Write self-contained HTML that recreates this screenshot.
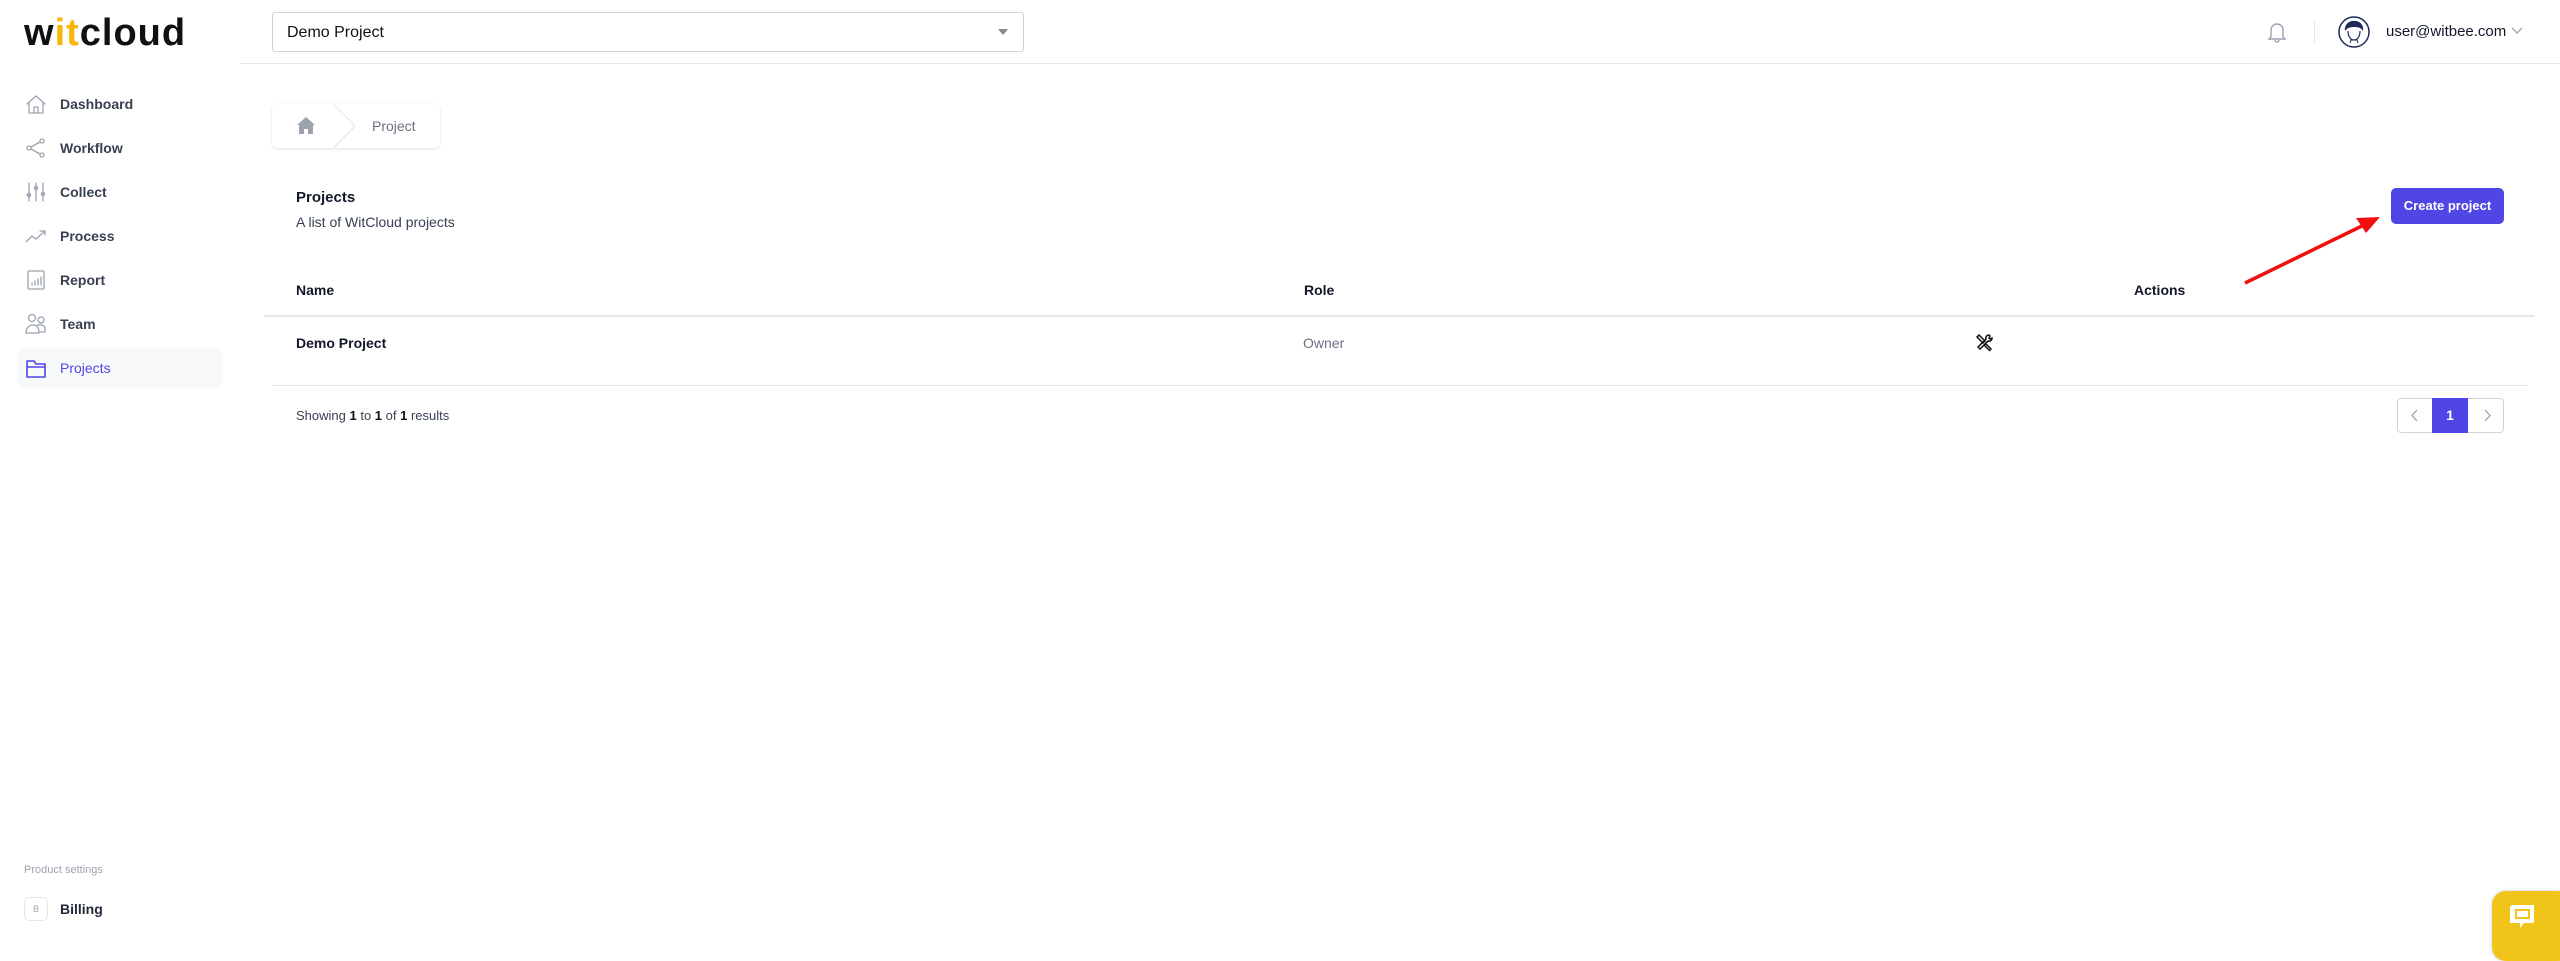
<!DOCTYPE html>
<html><head><meta charset="utf-8"><style>
*{box-sizing:border-box;margin:0;padding:0}
body{width:2560px;height:945px;background:#fff;font-family:"Liberation Sans",sans-serif;position:relative;overflow:hidden;color:#111827}
.a{position:absolute}
.nav{position:absolute;left:25px;height:22px;display:flex;align-items:center;font-size:14px;font-weight:bold;color:#374151}
.nav svg{width:22px;height:22px;margin-right:13px;fill:none;stroke:#9ca3af;stroke-width:1.3;stroke-linecap:round;stroke-linejoin:round}
</style></head><body>
<div class="a" style="left:24px;top:12px;font-size:38px;font-weight:bold;letter-spacing:1px;color:#111;line-height:42px">w<span style="color:#f5b70a">it</span>cloud</div>
<div class="a" style="left:272px;top:12px;width:752px;height:40px;border:1px solid #d1d5db;border-radius:3px;"></div>
<div class="a" style="left:287px;top:24px;font-size:16px;color:#111">Demo Project</div>
<div class="a" style="left:998px;top:29px;width:0;height:0;border-left:5px solid transparent;border-right:5px solid transparent;border-top:6px solid #888"></div>
<div class="a" style="left:240px;top:63px;width:2320px;height:1px;background:#e5e7eb"></div>
<svg class="a" style="left:2267px;top:21px" width="20" height="22" viewBox="0 0 20 22" fill="none" stroke="#9ca3af" stroke-width="1.4"><path d="M4 16V9a6 6 0 0 1 12 0v7l2 2H2z"/><path d="M8 19a2 2 0 0 0 4 0"/></svg>
<div class="a" style="left:2314px;top:21px;width:1px;height:22px;background:#e5e7eb"></div>
<svg class="a" style="left:2338px;top:16px" width="32" height="32" viewBox="0 0 32 32"><circle cx="16" cy="16" r="15" fill="#fff" stroke="#1e2a5a" stroke-width="1.5"/><path d="M7 15c-1-7 5-11 10-10 5 0 9 4 8 10-2-3-4-4-9-4-4 0-7 1-9 4z" fill="#1e2a5a"/><path d="M10 15c0 6 3 9 6 9s6-3 6-9" fill="none" stroke="#1e2a5a" stroke-width="1.2"/><path d="M12 27l1-3h6l1 3" fill="none" stroke="#1e2a5a"/></svg>
<div class="a" style="left:2386px;top:23px;font-size:15px;color:#111827">user@witbee.com</div>
<svg class="a" style="left:2511px;top:27px" width="12" height="8"><path d="M1 1l5 5 5-5" fill="none" stroke="#9ca3af" stroke-width="1.3"/></svg>

<div class="nav" style="top:93px"><svg viewBox="0 0 22 22"><path d="M2 11L11 3l9 8M4 9v11h14V9M9 20v-6h4v6"/></svg>Dashboard</div>
<div class="nav" style="top:137px"><svg viewBox="0 0 22 22"><circle cx="17" cy="4" r="2"/><circle cx="17" cy="18" r="2"/><circle cx="4" cy="11" r="2"/><path d="M6 10l9-5M6 12l9 5"/></svg>Workflow</div>
<div class="nav" style="top:181px"><svg viewBox="0 0 22 22"><path d="M4 2v18M11 2v18M18 2v18"/><circle cx="4" cy="14" r="1.6"/><circle cx="11" cy="7" r="1.6"/><circle cx="18" cy="13" r="1.6"/></svg>Collect</div>
<div class="nav" style="top:225px"><svg viewBox="0 0 22 22"><path d="M1 17l6-6 4 3 9-8M15 6h5v4"/></svg>Process</div>
<div class="nav" style="top:269px"><svg viewBox="0 0 22 22"><rect x="3" y="2" width="16" height="18" rx="1"/><path d="M7 16v-2M10 16v-4M13 16v-6M16 16v-8"/></svg>Report</div>
<div class="nav" style="top:313px"><svg viewBox="0 0 22 22"><circle cx="7" cy="5" r="3.5"/><circle cx="16" cy="7" r="3"/><path d="M1 20c0-6 4-8 7-8s6 2 6 8zM12 13c1-2 7-2 8 2v4h-6"/></svg>Team</div>
<div class="a" style="left:17px;top:348px;width:206px;height:40px;background:#f8f9fb;border-radius:6px"></div>
<div class="nav" style="top:357px;color:#4f46e5;font-weight:normal"><svg viewBox="0 0 22 22" style="stroke:#4f46e5;stroke-width:1.6"><path d="M2 4h7l2 3h9v13H2zM2 10h18"/></svg>Projects</div>

<div class="a" style="left:24px;top:864px;font-size:11px;color:#9ca3af">Product settings</div>
<div class="a" style="left:24px;top:897px;width:24px;height:24px;border:1px solid #e5e7eb;border-radius:5px;font-size:9px;color:#9ca3af;text-align:center;line-height:22px">B</div>
<div class="a" style="left:60px;top:901px;font-size:14px;font-weight:bold;color:#1f2937">Billing</div>

<div class="a" style="left:272px;top:104px;width:168px;height:44px;background:#fff;border-radius:6px;box-shadow:0 1px 3px rgba(0,0,0,.12)"></div>
<svg class="a" style="left:333px;top:104px" width="24" height="44"><path d="M0 0l22 22L0 44" fill="none" stroke="#e5e7eb" stroke-width="1.2"/></svg>
<svg class="a" style="left:297px;top:117px" width="18" height="17" viewBox="0 0 18 17"><path d="M9 0L0 8h2v9h5v-5h4v5h5V8h2z" fill="#9ca3af"/></svg>
<div class="a" style="left:372px;top:118px;font-size:14px;color:#6b7280">Project</div>

<div class="a" style="left:296px;top:189px;font-size:15px;font-weight:bold;color:#111827">Projects</div>
<div class="a" style="left:296px;top:214px;font-size:14px;color:#374151">A list of WitCloud projects</div>
<div class="a" style="left:2391px;top:188px;width:113px;height:36px;background:#4f46e5;border-radius:5px;color:#fff;font-size:13px;font-weight:bold;text-align:center;line-height:36px">Create project</div>
<svg class="a" style="left:2240px;top:210px" width="150" height="80"><path d="M5 73L128 13" stroke="#f01010" stroke-width="3.5"/><path d="M140 7l-24 1 10 15z" fill="#f01010"/></svg>

<div class="a" style="left:296px;top:282px;font-size:14px;font-weight:bold;color:#111827">Name</div>
<div class="a" style="left:1304px;top:282px;font-size:14px;font-weight:bold;color:#111827">Role</div>
<div class="a" style="left:2134px;top:282px;font-size:14px;font-weight:bold;color:#111827">Actions</div>
<div class="a" style="left:264px;top:315px;width:2271px;height:2px;background:#e5e7eb"></div>
<div class="a" style="left:296px;top:335px;font-size:14px;font-weight:bold;color:#111827">Demo Project</div>
<div class="a" style="left:1303px;top:335px;font-size:14px;color:#6b7280">Owner</div>
<svg class="a" style="left:1975px;top:333px" width="19" height="19" viewBox="0 0 19 19" fill="none" stroke="#111" stroke-width="1.5"><path d="M2 4l2-2 6 6-2 2zM10 10l6 6-1.5 1.5-6-6M14 2a3 3 0 0 0-3 4L3 14l2 2 8-8a3 3 0 0 0 4-3l-2 1-1-1 1-2z"/></svg>
<div class="a" style="left:272px;top:385px;width:2256px;height:1px;background:#e5e7eb"></div>
<div class="a" style="left:296px;top:408px;font-size:13px;color:#374151">Showing <b style="color:#111">1</b> to <b style="color:#111">1</b> of <b style="color:#111">1</b> results</div>
<div class="a" style="left:2397px;top:398px;width:107px;height:35px;border:1px solid #d1d5db;border-radius:4px"></div>
<div class="a" style="left:2432px;top:398px;width:36px;height:35px;background:#4f46e5;color:#fff;font-size:14px;font-weight:bold;text-align:center;line-height:35px">1</div>
<svg class="a" style="left:2410px;top:409px" width="8" height="13"><path d="M7 1L2 6.5 7 12" fill="none" stroke="#9ca3af" stroke-width="1.3"/></svg>
<svg class="a" style="left:2484px;top:409px" width="8" height="13"><path d="M1 1l5 5.5L1 12" fill="none" stroke="#9ca3af" stroke-width="1.3"/></svg>

<div class="a" style="left:2492px;top:891px;width:80px;height:70px;background:#f0c419;border-radius:14px;box-shadow:0 0 4px rgba(0,0,0,.2)"></div>
<svg class="a" style="left:2508px;top:903px" width="30" height="28" viewBox="0 0 30 28"><path d="M4 2h22v18H16l-4 5v-5H2V4z" fill="#fff"/><rect x="8" y="7" width="13" height="8" fill="none" stroke="#f0c419" stroke-width="2"/></svg>
</body></html>
